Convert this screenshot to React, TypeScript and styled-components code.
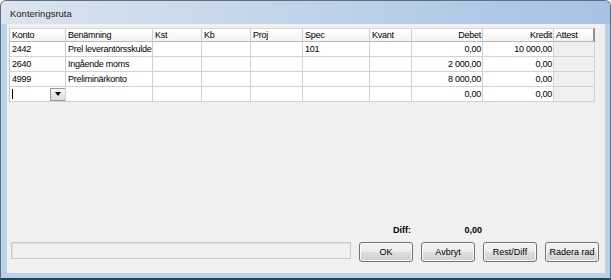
import React from "react";
import styled, { createGlobalStyle } from "styled-components";

const GlobalStyle = createGlobalStyle`
  html, body {
    margin: 0;
    padding: 0;
    background: #ffffff;
  }
  * {
    box-sizing: border-box;
  }
`;

const COLS = "56px 87px 49px 49px 52px 67px 42px 71px 71px 41px";

const Window = styled.div`
  width: 611px;
  height: 280px;
  display: flex;
  flex-direction: column;
  background: #bad1ea;
  border: 1px solid #5b6f86;
  border-bottom: 2px solid #1f4656;
  border-radius: 6px 6px 0 0;
  overflow: hidden;
  font-family: "Liberation Sans", Arial, sans-serif;
  font-size: 9px;
  color: #000;
`;

const TitleBar = styled.div`
  height: 23px;
  flex: none;
  display: flex;
  align-items: center;
  padding-left: 9px;
  padding-top: 2px;
  background: linear-gradient(
    to right,
    #dce4ed 0%,
    #c9d8ea 35%,
    #b5cce7 70%,
    #a7c2e3 100%
  );
  font-size: 9.5px;
  color: #1b1b1b;
`;

const Frame = styled.div`
  flex: 1;
  display: flex;
  padding: 0 5px 5px 6px;
`;

const Panel = styled.div`
  flex: 1;
  display: flex;
  flex-direction: column;
  background: #f0f0f0;
  padding: 4px 0 11px 2px;
`;

const Grid = styled.div`
  display: flex;
  flex-direction: column;
  width: 585px;
  border-left: 1px solid #c9c9c9;
  letter-spacing: -0.25px;
`;

const Row = styled.div<{ $h: number }>`
  display: grid;
  grid-template-columns: ${COLS};
  height: ${(p) => p.$h}px;
`;

const HeadCell = styled.div<{ $right?: boolean; $last?: boolean }>`
  display: flex;
  align-items: center;
  justify-content: ${(p) => (p.$right ? "flex-end" : "flex-start")};
  padding: ${(p) => (p.$right ? "0 1px 0 2px" : "0 0 0 2px")};
  background: linear-gradient(#ffffff, #f3f3f3);
  border-top: 1px solid #d6d6d6;
  border-right: ${(p) => (p.$last ? "2px solid #8f8f8f" : "1px solid #cfcfcf")};
  border-bottom: 1px solid #b9b9b9;
  white-space: nowrap;
  overflow: hidden;
`;

const Cell = styled.div<{ $right?: boolean; $readOnly?: boolean }>`
  display: flex;
  align-items: center;
  justify-content: ${(p) => (p.$right ? "flex-end" : "flex-start")};
  padding: ${(p) => (p.$right ? "0 1px 0 2px" : "0 0 0 2px")};
  background: ${(p) => (p.$readOnly ? "#efefef" : "#ffffff")};
  border-right: 1px solid #d2d2d2;
  border-bottom: 1px solid #d2d2d2;
  white-space: nowrap;
  overflow: hidden;
`;

const ComboCell = styled.div`
  display: flex;
  align-items: center;
  background: #ffffff;
  border-right: 1px solid #d2d2d2;
  border-bottom: 1px solid #d2d2d2;
  padding-left: 2px;
`;

const Caret = styled.div`
  width: 1px;
  height: 10px;
  background: #000;
  flex: none;
`;

const DropButton = styled.div`
  margin-left: auto;
  width: 15px;
  height: 13px;
  display: flex;
  align-items: center;
  justify-content: center;
  background: linear-gradient(#f4f4f4, #dcdcdc);
  border: 1px solid #9a9a9a;
  border-right: none;
`;

const Arrow = styled.div`
  width: 0;
  height: 0;
  border-left: 3.5px solid transparent;
  border-right: 3.5px solid transparent;
  border-top: 4px solid #000;
`;

const Footer = styled.div`
  margin-top: auto;
  display: flex;
  flex-direction: column;
`;

const SummaryRow = styled.div`
  display: grid;
  grid-template-columns: ${COLS};
  width: 585px;
  height: 14px;
  padding-left: 1px;
  font-weight: bold;
`;

const SummaryCell = styled.div<{ $col: number }>`
  grid-column: ${(p) => p.$col};
  display: flex;
  align-items: center;
  justify-content: flex-end;
  padding-right: 1px;
`;

const ButtonBar = styled.div`
  display: flex;
  align-items: flex-start;
  gap: 8px;
  margin-top: 5px;
  padding-left: 2px;
`;

const StatusBox = styled.div`
  width: 340px;
  height: 17px;
  background: #f0f0f0;
  border: 1px solid #cacaca;
  box-shadow: inset 1px 1px 0 #e2e2e2;
`;

const Button = styled.button`
  width: 54px;
  height: 20px;
  margin: 0;
  padding: 0;
  font-family: "Liberation Sans", Arial, sans-serif;
  font-size: 9px;
  color: #000;
  border: 1px solid #707070;
  border-radius: 3px;
  background: linear-gradient(
    #f4f4f4 0%,
    #ececec 48%,
    #dddddd 52%,
    #cfcfcf 100%
  );
  box-shadow: inset 0 0 0 1px #fbfbfb;
`;

type Col = { label: string; right?: boolean };

const columns: Col[] = [
  { label: "Konto" },
  { label: "Benämning" },
  { label: "Kst" },
  { label: "Kb" },
  { label: "Proj" },
  { label: "Spec" },
  { label: "Kvant" },
  { label: "Debet", right: true },
  { label: "Kredit", right: true },
  { label: "Attest" },
];

const rows = [
  ["2442", "Prel leverantörsskulde", "", "", "", "101", "", "0,00", "10 000,00", ""],
  ["2640", "Ingående moms", "", "", "", "", "", "2 000,00", "0,00", ""],
  ["4999", "Preliminärkonto", "", "", "", "", "", "8 000,00", "0,00", ""],
];

const App = () => {
  return (
    <>
      <GlobalStyle />
      <Window>
        <TitleBar>Konteringsruta</TitleBar>
        <Frame>
          <Panel>
            <Grid>
              <Row $h={14}>
                {columns.map((c, i) => (
                  <HeadCell key={c.label} $right={c.right} $last={i === columns.length - 1}>
                    {c.label}
                  </HeadCell>
                ))}
              </Row>
              {rows.map((r) => (
                <Row $h={15} key={r[0]}>
                  {r.map((v, i) => (
                    <Cell key={i} $right={columns[i].right} $readOnly={i === 9}>
                      {v}
                    </Cell>
                  ))}
                </Row>
              ))}
              <Row $h={15}>
                <ComboCell>
                  <Caret />
                  <DropButton>
                    <Arrow />
                  </DropButton>
                </ComboCell>
                {columns.slice(1).map((c, i) => (
                  <Cell key={c.label} $right={c.right} $readOnly={i === 8}>
                    {c.label === "Debet" || c.label === "Kredit" ? "0,00" : ""}
                  </Cell>
                ))}
              </Row>
            </Grid>
            <Footer>
              <SummaryRow>
                <SummaryCell $col={7}>Diff:</SummaryCell>
                <SummaryCell $col={8}>0,00</SummaryCell>
              </SummaryRow>
              <ButtonBar>
                <StatusBox />
                <Button>OK</Button>
                <Button>Avbryt</Button>
                <Button>Rest/Diff</Button>
                <Button>Radera rad</Button>
              </ButtonBar>
            </Footer>
          </Panel>
        </Frame>
      </Window>
    </>
  );
};

export default App;
